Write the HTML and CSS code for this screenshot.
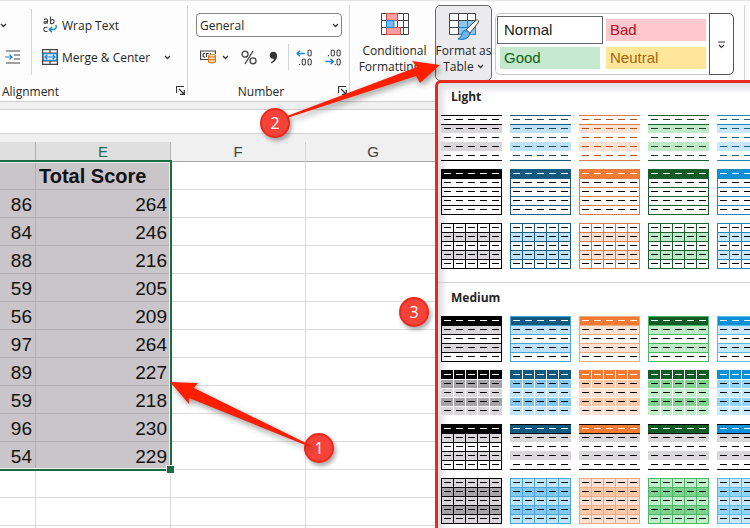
FILE: index.html
```
<!DOCTYPE html>
<html lang="en">
<head>
<meta charset="UTF-8">
<meta name="viewport" content="width=device-width, initial-scale=1">
<title>Format as Table</title>
<link rel="stylesheet" href="styles.css">
</head>
<body>
<div class="app">

  <header class="ribbon">
    <section class="group group-alignment">
      <div class="group-body">
        <div class="indent-col">
          <button class="tool" aria-label="More orientation options"><svg class="chev" width="7" height="5" viewBox="0 0 7 5"><path d="M1 1l2.500 2.500L6 1"/></svg></button>
          <button class="tool" aria-label="Increase indent">
            <svg width="16" height="14" viewBox="0 0 16 14" fill="none" stroke="#444" stroke-width="1.2"><path d="M1 1h14M9 5h6M9 9h6M1 13h14"/><path d="M0 7h7M4.500 4.500L7 7l-2.500 2.500" stroke="#1c84d0"/></svg>
          </button>
        </div>
        <div class="align-col">
          <button class="tool">
            <svg width="16" height="18" viewBox="0 0 16 18" fill="none" stroke="#444" stroke-width="1.1"><path d="M2 3.500q3-1.500 3.500 .8v3.200M5.500 5.300q-3.700 0-3.700 1.300q.6 1.600 3.700 0M8.500 .5v7.500M8.500 4.500q2-2 3.500 0v1.500q-1 2.500-3.500 1.200M5.500 11.500q-3.700-1-3.700 2q.2 2.800 3.700 1.800"/><path d="M14 9q1 4-2.500 4.500H7.500M10 11l-2.700 2.600L10 16.200" stroke="#1c84d0" stroke-width="1.400"/></svg>
            Wrap Text
          </button>
          <button class="tool">
            <svg width="16" height="16" viewBox="0 0 16 16" fill="none" stroke="#444" stroke-width="1.200"><path d="M.6 .6h14.800v14.800H.6zM.6 4h14.800M.6 12h14.800M8 .6V4M8 12v3.400"/><path d="M1.200 4.600h13.600v6.800H1.200z" fill="#dff0fc" stroke="#1c84d0"/><path d="M3 8h10M5.300 5.800L3 8l2.300 2.200M10.700 5.800L13 8l-2.300 2.200" stroke="#1c84d0"/></svg>
            Merge &amp; Center
            <svg class="chev merge-chev" width="7" height="5" viewBox="0 0 7 5"><path d="M1 1l2.500 2.500L6 1"/></svg>
          </button>
        </div>
      </div>
      <footer class="group-name">Alignment
        <button class="launcher" aria-label="Alignment settings"><svg width="9" height="9" viewBox="0 0 9 9"><path d="M.5 7V.5H8M3 3l5 5M8.300 4v4.300H4"/></svg></button>
      </footer>
    </section>

    <section class="group group-number">
      <div class="group-body number-body">
        <div class="format-row">
          <select class="format-select" aria-label="Number format"><option>General</option></select>
          <svg class="chev" width="7" height="5" viewBox="0 0 7 5"><path d="M1 1l2.500 2.500L6 1"/></svg>
        </div>
        <div class="number-row">
          <button class="tool accounting" aria-label="Accounting format">
            <svg width="17" height="14" viewBox="0 0 17 14" fill="none" stroke="#444" stroke-width="1.200"><path d="M8 9.500H.6V1h14.800v3M5 3.500q-2-.5-2 1.700t2 1.800M6.500 7.300V3.500h2.200M10.500 3.200v2"/><path d="M8.600 6v6q3.400 1.800 6.800 0V6" fill="#fde3c8" stroke="#d97a16"/><ellipse cx="12" cy="5.800" rx="3.400" ry="1.300" fill="#fff" stroke="#d97a16"/><path d="M8.600 9q3.400 1.800 6.800 0" stroke="#d97a16"/></svg>
            <svg class="chev" width="7" height="5" viewBox="0 0 7 5"><path d="M1 1l2.500 2.500L6 1"/></svg>
          </button>
          <button class="tool" aria-label="Percent style">
            <svg width="16" height="15" viewBox="0 0 16 15" fill="none" stroke="#444" stroke-width="1.300"><circle cx="4" cy="4.200" r="3"/><circle cx="12" cy="10.800" r="3"/><path d="M12 1L4 14"/></svg>
          </button>
          <button class="tool" aria-label="Comma style">
            <svg width="9" height="13" viewBox="0 0 9 13"><path d="M4 .8q4 0 4 4.200q0 5-5.500 7.500l-.6-1.200q3-1.400 3-3.500Q.8 8.200 .8 4.300Q1 .8 4 .8z" fill="#333"/></svg>
          </button>
          <span class="tool-sep"></span>
          <button class="tool" aria-label="Increase decimal">
            <svg width="17" height="17" viewBox="0 0 17 17" fill="none" stroke="#444" stroke-width="1.100"><path d="M.8 4.500h8M4 1.700L1 4.500l3 2.800" stroke="#1c84d0" stroke-width="1.300"/><rect x="12" y="1" width="3.200" height="6" rx="1.500"/><rect x="6.200" y="10" width="3.200" height="6" rx="1.500"/><rect x="12" y="10" width="3.200" height="6" rx="1.500"/><path d="M3.500 15v1.200"/></svg>
          </button>
          <button class="tool" aria-label="Decrease decimal">
            <svg width="17" height="17" viewBox="0 0 17 17" fill="none" stroke="#444" stroke-width="1.100"><path d="M.5 12.500h8M5.500 9.700l3 2.800-3 2.800" stroke="#1c84d0" stroke-width="1.300"/><rect x="6.200" y="1" width="3.200" height="6" rx="1.500"/><rect x="12" y="1" width="3.200" height="6" rx="1.500"/><rect x="12" y="10" width="3.200" height="6" rx="1.500"/><path d="M3.500 6v1.200M10.200 15v1.200"/></svg>
          </button>
        </div>
      </div>
      <footer class="group-name">Number
        <button class="launcher" aria-label="Number settings"><svg width="9" height="9" viewBox="0 0 9 9"><path d="M.5 7V.5H8M3 3l5 5M8.300 4v4.300H4"/></svg></button>
      </footer>
    </section>

    <section class="group group-styles">
      <button class="big-button conditional">
        <svg width="28" height="28" viewBox="0 0 28 28" fill="none" stroke="#444"><path d="M.5 .5h27v21H.5z" fill="#fff"/><path d="M.5 7.500h27M.5 14.500h27M5.500 .5v21M16.500 .5v21M22.500 .5v21"/><path d="M5.500 .5h11v7h-11zM5.500 14.500h14v7h-14z" fill="#ff9c9c" stroke="#d84b4b"/><path d="M5.500 7.500h7.500v7H5.500z" fill="#72b8ee" stroke="#1c84d0"/></svg>
        <span>Conditional<br>Formatting <svg class="chev" width="7" height="5" viewBox="0 0 7 5"><path d="M1 1l2.500 2.500L6 1"/></svg></span>
      </button>
      <button class="big-button pressed">
        <svg width="30" height="28" viewBox="0 0 30 28" fill="none" stroke="#444"><path d="M.5 .5h26v21H.5z" fill="#fff"/><path d="M9.500 7.500h17v14h-17z" fill="#8cc6f3" stroke="#1c84d0"/><path d="M.5 7.500h26M.5 14.500h9M9.500 .5v21M18.500 .5v7"/><path d="M9.500 14.500h17M18.500 7.500v14" stroke="#1c84d0"/><path d="M28.500 7q2 .5 .5 3l-8 10-4-3L26 8q1.500-1.200 2.500-1z" fill="#fff"/><path d="M17 17l4 3q-.5 5-5 6-3 .8-7 0 3-1 3.500-4 .7-4.500 4.500-5z" fill="#6eb4ec" stroke="#1c6fb5"/></svg>
        <span>Format as<br>Table <svg class="chev" width="7" height="5" viewBox="0 0 7 5"><path d="M1 1l2.500 2.500L6 1"/></svg></span>
      </button>
      <div class="cell-styles">
        <div class="swatches">
          <button class="swatch normal">Normal</button>
          <button class="swatch bad">Bad</button>
          <button class="swatch good">Good</button>
          <button class="swatch neutral">Neutral</button>
        </div>
        <button class="more" aria-label="More cell styles"><svg width="9" height="8" viewBox="0 0 9 8"><path d="M1 1h7M2 4l2.500 2.500L7 4"/></svg></button>
      </div>
    </section>
  </header>

  <div class="formula-bar"><input type="text" aria-label="Formula bar"></div>

  <main class="sheet">
    <table>
      <colgroup><col class="col-d"><col class="col"><col class="col"><col class="col"><col></colgroup>
      <thead><tr><th class="in"></th><th class="in">E</th><th>F</th><th>G</th><th></th></tr></thead>
      <tbody>
        <tr><td class="in"></td><td class="in title">Total Score</td><td></td><td></td><td></td></tr>
        <tr><td class="in">86</td><td class="in">264</td><td></td><td></td><td></td></tr>
        <tr><td class="in">84</td><td class="in">246</td><td></td><td></td><td></td></tr>
        <tr><td class="in">88</td><td class="in">216</td><td></td><td></td><td></td></tr>
        <tr><td class="in">59</td><td class="in">205</td><td></td><td></td><td></td></tr>
        <tr><td class="in">56</td><td class="in">209</td><td></td><td></td><td></td></tr>
        <tr><td class="in">97</td><td class="in">264</td><td></td><td></td><td></td></tr>
        <tr><td class="in">89</td><td class="in">227</td><td></td><td></td><td></td></tr>
        <tr><td class="in">59</td><td class="in">218</td><td></td><td></td><td></td></tr>
        <tr><td class="in">96</td><td class="in">230</td><td></td><td></td><td></td></tr>
        <tr><td class="in">54</td><td class="in">229</td><td></td><td></td><td></td></tr>
        <tr><td></td><td></td><td></td><td></td><td></td></tr>
        <tr><td></td><td></td><td></td><td></td><td></td></tr>
        <tr><td></td><td></td><td></td><td></td><td></td></tr>
      </tbody>
    </table>
    <div class="selection"><span class="handle"></span></div>
  </main>

  <aside class="gallery">
    <h2>Light</h2>
    <div class="thumbs" id="light"></div>
    <h2 class="ruled">Medium</h2>
    <div class="thumbs" id="medium"></div>
  </aside>

  <!-- callouts -->
  <span class="pin pin-1">1</span>
  <span class="pin pin-2">2</span>
  <span class="pin pin-3">3</span>
  <svg class="arrows" width="450" height="500" viewBox="0 0 450 500">
    <path d="M170 382l28 1-4 5 118 58-2 1-121-49v6z"/>
    <path d="M287 116l130-49-5-6 28 4-20 18-4-7-129 42z"/>
  </svg>
</div>
<script src="gallery.js"></script>
</body>
</html>
```
FILE: styles.css
```
* {
  box-sizing: border-box;
}

body {
  margin: 0;
  font-family: "Open Sans", "Noto Sans", sans-serif;
  font-size: 12px;
  color: #262626;
  background: #fff;
}

button,
select,
input {
  font: inherit;
  color: inherit;
  margin: 0;
  padding: 0;
  border: 0;
  background: none;
}

svg {
  flex: none;
}

.app {
  position: relative;
  height: 100vh;
  overflow: hidden;
}

/* Ribbon */
.ribbon {
  display: flex;
  height: 102px;
  border-top: 1px solid #e3e3e3;
  border-bottom: 1px solid #cfcfcf;
  background: #fdfdfd;
}

.group {
  position: relative;
  display: flex;
  flex-direction: column;
  padding-top: 8px;
}

.group::after {
  content: "";
  position: absolute;
  right: 0;
  top: 4px;
  bottom: 6px;
  width: 1px;
  background: #d4d4d4;
}

.group-alignment {
  width: 188px;
}

.group-number {
  width: 162px;
}

.group-body {
  display: flex;
  height: 72px;
}

.indent-col {
  width: 32px;
  height: 66px;
  border-right: 1px solid #d4d4d4;
}

.indent-col .tool {
  justify-content: flex-start;
  padding-left: 5px;
}

.indent-col .tool:first-child {
  padding-left: 0;
}

.align-col {
  flex: 1;
  padding-left: 10px;
}

.tool {
  display: flex;
  align-items: center;
  gap: 4px;
  height: 32px;
  white-space: nowrap;
}

.chev {
  fill: none;
  stroke: #333;
  stroke-width: 1.3;
}

.merge-chev {
  margin-left: 10px;
}

.group-name {
  display: flex;
  align-items: center;
  justify-content: center;
  height: 20px;
}

.group-alignment .group-name {
  justify-content: flex-start;
  padding-left: 2px;
}

.launcher {
  position: absolute;
  right: 3px;
  bottom: 6px;
  height: 9px;
  line-height: 0;
}

.launcher path,
.more path {
  fill: none;
  stroke: #333;
  stroke-width: 1.2;
}

.number-body {
  flex-direction: column;
}

.group-number .group-name {
  padding-right: 16px;
}

.format-row {
  position: relative;
  margin: 4px 8px 5px;
}

.format-select {
  appearance: none;
  display: block;
  width: 100%;
  height: 24px;
  padding: 0 3px;
  border: 1px solid #858585;
  border-radius: 4px;
  background: #fff;
}

.format-row .chev {
  position: absolute;
  right: 3px;
  top: 10px;
}

.number-row {
  display: flex;
  align-items: center;
  gap: 12px;
  padding-left: 12px;
  height: 30px;
}

.accounting {
  gap: 5px;
}

.tool-sep {
  width: 1px;
  height: 26px;
  margin: 0 -5px 0 -2px;
  background: #d4d4d4;
}

.group-styles {
  flex: 1;
  flex-direction: row;
  align-items: flex-start;
  margin-right: 5px;
  padding-top: 4px;
}

.big-button {
  display: flex;
  flex-direction: column;
  align-items: center;
  gap: 2px;
  height: 76px;
  padding-top: 7px;
  border: 1px solid transparent;
  border-radius: 5px;
  line-height: 16px;
}

.conditional {
  width: 85px;
  padding-left: 4px;
}

.pressed {
  width: 57px;
  border-color: #6b6b6b;
  background: #ebebee;
  white-space: nowrap;
}

.big-button .chev {
  vertical-align: 2px;
}

.cell-styles {
  display: flex;
  margin: 8px 0 0 3px;
  height: 62px;
  border: 1px solid #c8c8c8;
  border-radius: 5px;
  background: #fff;
}

.swatches {
  display: grid;
  grid-template-columns: 100px 100px;
  grid-auto-rows: 22px;
  gap: 6px;
  padding: 5px 4px;
}

.swatch {
  padding-left: 4px;
  font-family: "Liberation Sans", sans-serif;
  font-size: 15px;
  line-height: 20px;
  text-align: left;
}

.normal {
  color: #1a1a1a;
  outline: 1px solid #666;
  outline-offset: 2px;
}

.bad {
  background: #ffc7ce;
  color: #b01020;
}

.good {
  background: #c4e9cf;
  color: #126016;
}

.neutral {
  background: #ffe699;
  color: #a66410;
}

.more {
  width: 25px;
  margin: -1px;
  border: 1px solid #555;
  border-radius: 0 5px 5px 0;
}

/* Formula bar */
.formula-bar {
  height: 40px;
  padding: 7px 0 8px;
  background: #f0f0f0;
}

.formula-bar input {
  display: block;
  width: 100%;
  height: 25px;
  border-top: 1px solid #d0d0d0;
  border-bottom: 1px solid #d0d0d0;
  background: #fff;
}

/* Sheet */
.sheet {
  position: relative;
  font-family: "Liberation Sans", sans-serif;
}

.sheet table {
  width: 100%;
  table-layout: fixed;
  border-collapse: separate;
  border-spacing: 0;
}

.col-d {
  width: 36px;
}

.col {
  width: 135px;
}

.sheet th {
  height: 20px;
  padding: 0;
  border-right: 1px solid #d4d4d4;
  border-bottom: 1px solid #a8a8a8;
  background: #f0f0f0;
  color: #444;
  font-size: 15px;
  font-weight: normal;
  line-height: 19px;
}

.sheet th.in {
  background: #dfdfdf;
  color: #1e6b47;
  border-right-color: #b4b4b4;
}

.sheet td {
  height: 28px;
  padding: 2px 3px 0;
  border-right: 1px solid #dcdcdc;
  border-bottom: 1px solid #dcdcdc;
  color: #111;
  font-size: 19px;
  line-height: 25px;
  text-align: right;
}

.sheet td.in {
  background: #c9c5c9;
  border-color: #b1adb1;
}

.sheet td.title {
  font-size: 20px;
  font-weight: bold;
  text-align: left;
}

.selection {
  position: absolute;
  left: -3px;
  top: 18px;
  width: 175px;
  height: 311px;
  border: 2px solid #1b6b45;
  box-shadow: inset 0 0 0 1px #eee;
}

.handle {
  position: absolute;
  right: -4px;
  bottom: -4px;
  width: 7px;
  height: 7px;
  background: #1b6b45;
  outline: 1px solid #fff;
}

/* Format as Table drop-down */
.gallery {
  position: absolute;
  left: 435px;
  right: -5px;
  top: 80px;
  bottom: -5px;
  overflow: hidden;
  border: 3px solid #e8281a;
  border-radius: 6px;
  background: #fff;
  box-shadow: inset 5px 6px 6px #dedee4;
}

.gallery h2 {
  height: 32px;
  margin: 0;
  padding: 4px 13px 0;
  font-size: 12px;
  line-height: 20px;
}

.gallery .ruled {
  height: 34px;
  margin-top: 13px;
  padding-top: 5px;
  border-top: 1px solid #d0d0d0;
}

.thumbs {
  display: grid;
  grid-template-columns: repeat(5, 61px);
  gap: 8px;
  padding-left: 3px;
}

.thumb {
  height: 46px;
}

.thumb svg {
  display: block;
}

/* Callouts */
.arrows {
  position: absolute;
  left: 0;
  top: 0;
  fill: #ff1e00;
  filter: drop-shadow(2px 3px 3px rgba(0, 0, 0, 0.4));
  pointer-events: none;
}

.pin {
  position: absolute;
  width: 30px;
  height: 30px;
  border: 2px solid #f0281c;
  border-radius: 50%;
  background: #f5433a;
  box-shadow: 2px 3px 4px rgba(0, 0, 0, 0.35);
  color: #fff;
  font-size: 16px;
  line-height: 26px;
  text-align: center;
}

.pin-1 {
  left: 304px;
  top: 433px;
}

.pin-2 {
  left: 260px;
  top: 108px;
}

.pin-3 {
  left: 399px;
  top: 297px;
}
```
FILE: gallery.js
```
// dark: header, mid: medium borders, band / pale: row fills, ink: dashes of the plain style
var themes = [
  { name: 'Black',  dark: '#000000', line: '#000000', mid: '#000000', band: '#d9d7d9', strong: '#a5a3a6', pale: '#d9d7d9', ink: '#000000' },
  { name: 'Blue',   dark: '#12597f', line: '#1a5c80', mid: '#4ba6d6', band: '#c0e2f8', strong: '#83c6ee', pale: '#c0e5fa', ink: '#174a66' },
  { name: 'Orange', dark: '#f47a32', line: '#d97e49', mid: '#eeac85', band: '#fde1d3', strong: '#fbc8aa', pale: '#fee1d4', ink: '#b9541b' },
  { name: 'Green',  dark: '#145c26', line: '#1c5f2f', mid: '#4bb866', band: '#c0e9c8', strong: '#80d18f', pale: '#c2edca', ink: '#1c4425' },
  { name: 'Sky',    dark: '#0c90da', line: '#2288bb', mid: '#5bbbe2', band: '#c8e8fd', strong: '#92d4f9', pale: '#c8e9fe', ink: '#13648f' }
];

function rect(x, y, w, h, fill) {
  return '<rect x="' + x + '" y="' + y + '" width="' + w + '" height="' + h + '" fill="' + fill + '"/>';
}

function thumb(name, s) {
  var out = '';
  for (var r = 0; r < 5; r++) {
    var fill = r === 0 && s.header ? s.header : (r % 2 ? s.odd : s.even);
    if (fill) out += rect(0, r * 9, 61, r === 0 ? 10 : 9, fill);
  }
  s.rows.forEach(function(r) { out += rect(0, r * 9, 61, 1, s.line); });
  if (s.frame) out += rect(0, 0, 1, 46, s.line) + rect(60, 0, 1, 46, s.line);
  if (s.cols) {
    for (var c = 1; c < 5; c++) out += rect(c * 12, s.solidHeader ? 9 : 0, 1, 46, s.line);
  }
  for (var i = 0; i < 5; i++) {
    for (var j = 0; j < 5; j++) {
      out += rect(3 + j * 12, 4 + i * 9, 7, 1, i === 0 && s.header ? '#ffffff' : (s.ink || '#000000'));
    }
  }
  return '<button class="thumb" aria-label="' + name + '"><svg width="61" height="46" shape-rendering="crispEdges">' + out + '</svg></button>';
}

var all = [0, 1, 2, 3, 4, 5];

var light = [
  function(t) { return { odd: t.band, line: t.line, rows: [0, 1, 5], ink: t.ink }; },
  function(t) { return { header: t.dark, line: t.line, rows: all, frame: true }; },
  function(t) { return { odd: t.band, line: t.line, rows: all, frame: true, cols: true }; }
];

var medium = [
  function(t) { return { header: t.dark, odd: t.band, line: t.mid, rows: all, frame: true }; },
  function(t) { return { header: t.dark, odd: t.strong, even: t.pale, line: '#ffffff', rows: [1, 2, 3, 4], cols: true }; },
  function(t, i) {
    if (i === 0) return { header: t.dark, odd: t.band, line: t.mid, rows: all, frame: true, cols: true, solidHeader: true };
    return { header: t.dark, odd: '#dad7da', line: '#000000', rows: [0, 1, 5] };
  },
  function(t) { return { odd: t.strong, even: t.pale, line: t.mid, rows: all, frame: true, cols: true }; }
];

function fill(id, kinds) {
  var html = '';
  kinds.forEach(function(kind, k) {
    themes.forEach(function(t, i) {
      html += thumb(t.name + ', ' + id + ' style ' + (k + 1), kind(t, i));
    });
  });
  document.getElementById(id).innerHTML = html;
}

fill('light', light);
fill('medium', medium);
```
